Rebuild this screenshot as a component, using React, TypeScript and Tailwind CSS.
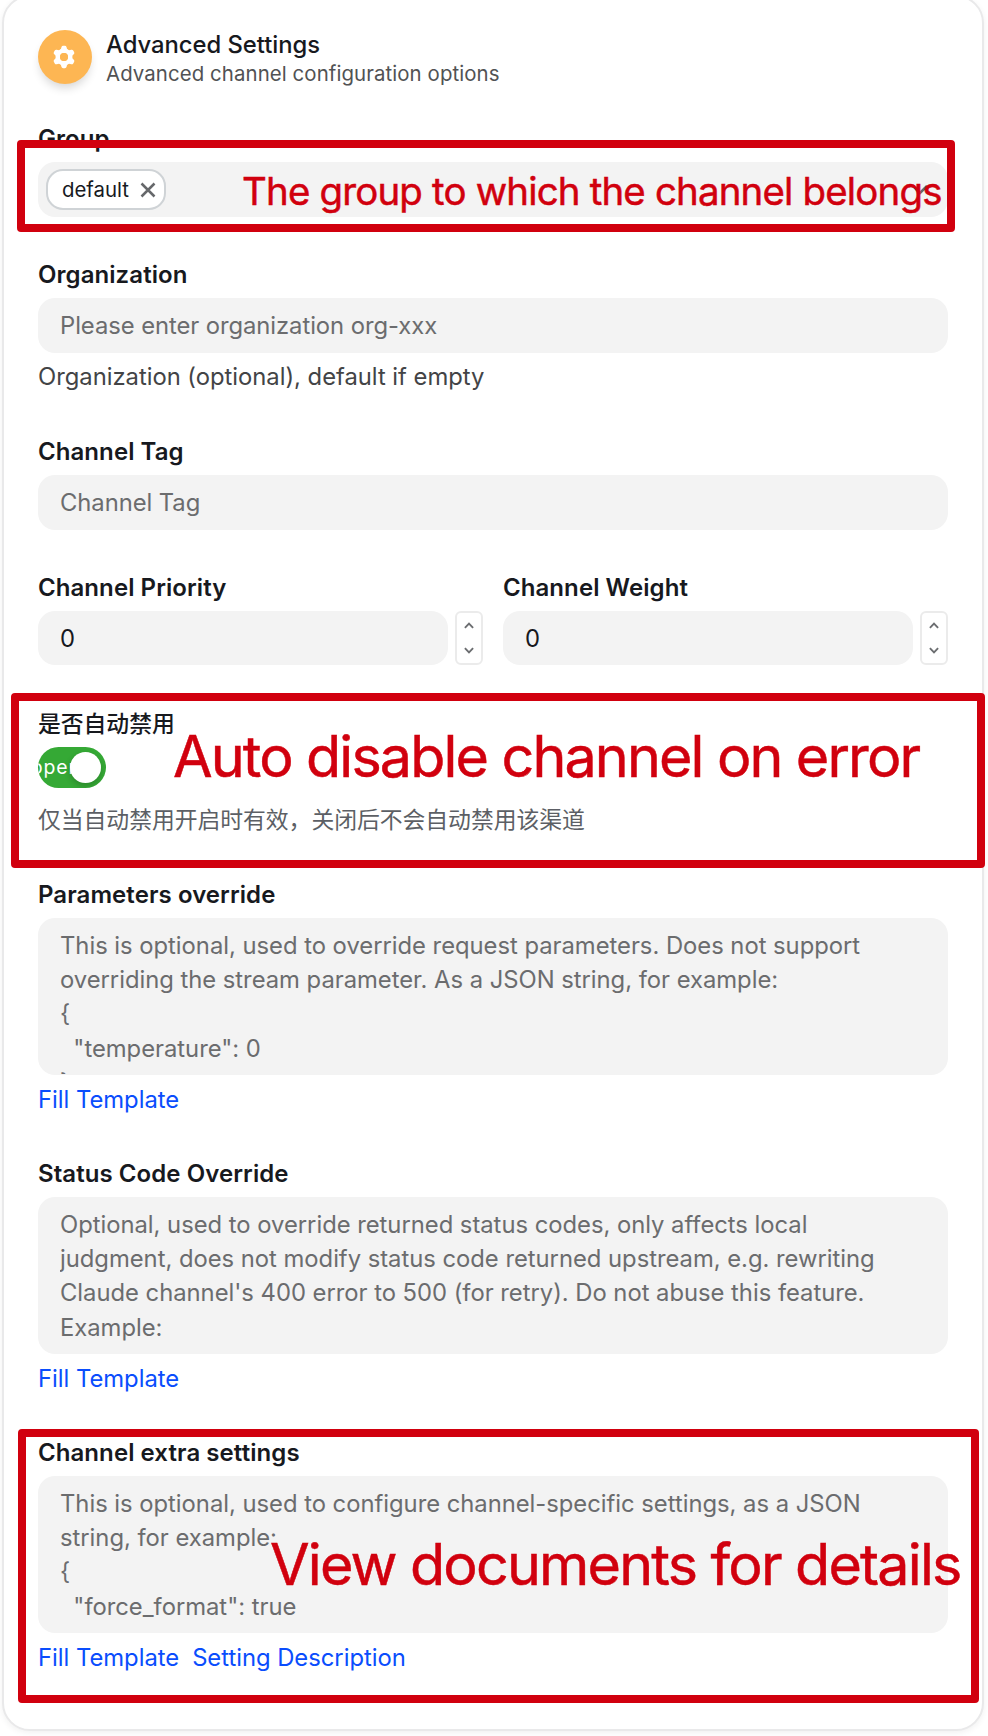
import type { ReactNode } from 'react';

function GearIcon() {
  return (
    <svg width="24" height="24" viewBox="-12 -12 24 24" className="-ml-[2px]">
      {[0, 60, 120, 180, 240, 300].map((angle) => (
        <path
          key={angle}
          transform={`rotate(${angle})`}
          d="M-4.6 -5 C-3.2 -7 -3 -8 -2.6 -9.8 Q-2.2 -11.2 -0.9 -11.2 H0.9 Q2.2 -11.2 2.6 -9.8 C3 -8 3.2 -7 4.6 -5 Z"
          fill="#fff"
        />
      ))}
      <circle r="6.2" fill="none" stroke="#fff" strokeWidth="4.6" />
      <circle r="4" fill="#fdb653" />
    </svg>
  );
}

function Chevron({ up = false }: { up?: boolean }) {
  return (
    <svg width="10" height="7" viewBox="0 0 10 7" fill="none" stroke="#6b6d70" strokeWidth="1.9">
      {up ? <path d="M0.9 5.8 L5 1.7 L9.1 5.8" /> : <path d="M0.9 1.2 L5 5.3 L9.1 1.2" />}
    </svg>
  );
}

function Label({ children }: { children: ReactNode }) {
  return (
    <div className="mb-[6px] h-[35px] whitespace-nowrap pt-px text-[24px] leading-[34px] font-semibold tracking-[0.07px] text-[#17191e]">
      {children}
    </div>
  );
}

function InputBox({ children }: { children: ReactNode }) {
  return (
    <div className="flex h-[55px] items-center rounded-[17px] bg-[#f3f3f3] px-[22px] tracking-[-0.06px] text-[#6b6c6e]">
      {children}
    </div>
  );
}

function TextBox({ lines }: { lines: string[] }) {
  return (
    <div className="h-[157px] overflow-hidden rounded-[17px] bg-[#f3f3f3] px-[22px] pt-[11px] text-[#6b6c6e]">
      <div className="h-[144.5px] overflow-hidden">
        {lines.map((line, i) => (
          <div key={i} className="h-[34.2px] whitespace-pre">
            {line}
          </div>
        ))}
      </div>
    </div>
  );
}

function Link({ children }: { children: ReactNode }) {
  return <a className="whitespace-nowrap text-[#0a4dfd]">{children}</a>;
}

function NumberField({ label }: { label: string }) {
  return (
    <div>
      <Label>{label}</Label>
      <div className="flex gap-[7px]">
        <div className="flex h-[54px] flex-1 items-center rounded-[17px] bg-[#f3f3f3] px-[22px] pt-[2px] text-[#17191e]">
          0
        </div>
        <div className="flex h-[54px] w-[28px] flex-col items-center justify-between rounded-[6px] border-2 border-[#ebebeb] py-[9px]">
          <Chevron up />
          <Chevron />
        </div>
      </div>
    </div>
  );
}

export default function App() {
  return (
    <div className="relative h-[1736px] w-[988px] overflow-hidden bg-white font-['Inter','Noto_Sans_CJK_SC',sans-serif] text-[23.8px] leading-[34px] tracking-[-0.02px]">
      <div className="ml-[2px] -mt-[5px] h-[1736px] w-[982px] rounded-[28px] border-2 border-[#e9e9ea] bg-white px-[34px] shadow-[0_2px_6px_rgba(0,0,0,0.06)]">
        <header className="flex items-start pt-[33px]">
          <div className="flex h-[54px] w-[54px] items-center justify-center rounded-full bg-[#fdb653] shadow-[0_6px_10px_-2px_rgba(0,0,0,0.16)]">
            <GearIcon />
          </div>
          <div className="-mt-px ml-[14px] whitespace-nowrap">
            <div className="h-[31px] text-[23.8px] leading-[31px] font-medium text-[#17191e]">
              Advanced Settings
            </div>
            <div className="h-[28px] text-[20.4px] leading-[28px] tracking-[0.09px] text-[#515254]">
              Advanced channel configuration options
            </div>
          </div>
        </header>

        <section className="mt-[33px]">
          <Label>Group</Label>
          <div className="flex h-[55px] items-center justify-between rounded-[17px] bg-[#f3f3f3] pr-[20px] pl-[8px]">
            <div className="flex h-[41px] w-[120px] items-center rounded-[17px] border-2 border-[#cfd3d6] bg-white pl-[14px] text-[20.4px] text-[#17191e]">
              default
              <svg width="16" height="16" viewBox="0 0 16 16" className="ml-[11px]" stroke="#66686b" strokeWidth="2.5">
                <path d="M1.5 1.5 L14.5 14.5 M14.5 1.5 L1.5 14.5" />
              </svg>
            </div>
            <svg width="16" height="10" viewBox="0 0 16 10" fill="none" stroke="#66686b" strokeWidth="2.6">
              <path d="M1 1 L8 8 L15 1" />
            </svg>
          </div>
        </section>

        <section className="mt-[40px]">
          <Label>Organization</Label>
          <InputBox>Please enter organization org-xxx</InputBox>
          <div className="mt-[7px] text-[#434446]">Organization (optional), default if empty</div>
        </section>

        <section className="mt-[40px]">
          <Label>Channel Tag</Label>
          <InputBox>Channel Tag</InputBox>
        </section>

        <section className="mt-[40px] grid grid-cols-[445px_445px] gap-[20px]">
          <NumberField label="Channel Priority" />
          <NumberField label="Channel Weight" />
        </section>

        <section className="mt-[41px]">
          <div className="h-[34px] pt-px text-[22.85px] font-medium tracking-[-0.06px] text-[#17191e]">是否自动禁用</div>
          <div className="relative mt-[7px] h-[41px] w-[68px] overflow-hidden rounded-full bg-[#35a935]">
            <span className="absolute top-0 -left-[7px] text-[19.4px] leading-[41px] tracking-[0.9px] text-white">open</span>
            <span className="absolute top-[5px] left-[32px] h-[31px] w-[31px] rounded-full bg-white shadow-[0_3px_6px_rgba(0,0,0,0.2)]" />
          </div>
          <div className="mt-[15px] h-[34px] text-[22.85px] tracking-[-0.06px] whitespace-nowrap text-[#5c5f65]">
            仅当自动禁用开启时有效，关闭后不会自动禁用该渠道
          </div>
        </section>

        <section className="mt-[40px]">
          <Label>Parameters override</Label>
          <TextBox
            lines={[
              'This is optional, used to override request parameters. Does not support',
              'overriding the stream parameter. As a JSON string, for example:',
              '{',
              '  "temperature": 0',
              '}',
            ]}
          />
          <div className="mt-[7px] h-[34px] pt-px">
            <Link>Fill Template</Link>
          </div>
        </section>

        <section className="mt-[40px]">
          <Label>Status Code Override</Label>
          <TextBox
            lines={[
              'Optional, used to override returned status codes, only affects local',
              'judgment, does not modify status code returned upstream, e.g. rewriting',
              "Claude channel's 400 error to 500 (for retry). Do not abuse this feature.",
              'Example:',
            ]}
          />
          <div className="mt-[7px] h-[34px] pt-px">
            <Link>Fill Template</Link>
          </div>
        </section>

        <section className="mt-[40px]">
          <Label>Channel extra settings</Label>
          <TextBox
            lines={[
              'This is optional, used to configure channel-specific settings, as a JSON',
              'string, for example:',
              '{',
              '  "force_format": true',
            ]}
          />
          <div className="mt-[7px] flex h-[34px] gap-[13px] pt-px">
            <Link>Fill Template</Link>
            <Link>Setting Description</Link>
          </div>
        </section>
      </div>

      <div className="absolute top-[140px] left-[17px] h-[92px] w-[938px] rounded-[4px] border-8 border-[#d1000e]" />
      <div className="absolute top-[169px] left-[242px] text-[38.4px] leading-[44px] tracking-[-0.8px] whitespace-nowrap text-[#d1000e] [-webkit-text-stroke:0.5px_#d1000e]">
        The group to which the channel belongs
      </div>

      <div className="absolute top-[693px] left-[11px] h-[175px] w-[974px] rounded-[4px] border-8 border-[#d1000e]" />
      <div className="absolute top-[720px] left-[173px] text-[57.4px] leading-[72px] tracking-[-1.85px] whitespace-nowrap text-[#d1000e] [-webkit-text-stroke:0.5px_#d1000e]">
        Auto disable channel on error
      </div>

      <div className="absolute top-[1429px] left-[18px] h-[274px] w-[961px] rounded-[4px] border-8 border-[#d1000e]" />
      <div className="absolute top-[1528px] left-[270px] text-[57.4px] leading-[72px] tracking-[-1.8px] whitespace-nowrap text-[#d1000e] [-webkit-text-stroke:0.5px_#d1000e]">
        View documents for details
      </div>
    </div>
  );
}
